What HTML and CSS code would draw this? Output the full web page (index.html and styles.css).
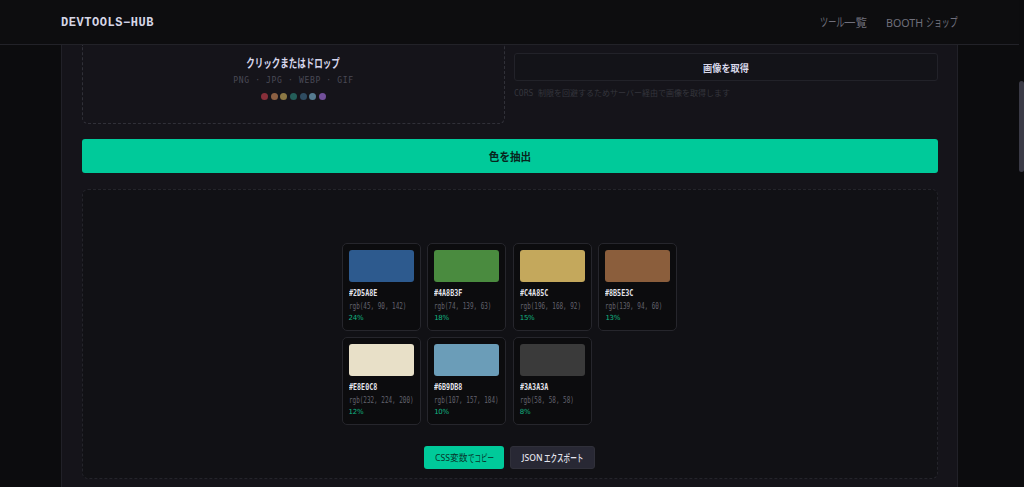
FILE: index.html
```html
<!DOCTYPE html>
<html lang="ja">
<head>
<meta charset="utf-8">
<title>DEVTOOLS-HUB</title>
<link rel="stylesheet" href="styles.css">
</head>
<body>
<header class="topbar">
  <div class="brand">DEVTOOLS−HUB</div>
  <nav class="nav"><a class="nav-tools"><span class="kana">ツール</span><span>一覧</span></a><a class="nav-shop"><span class="latin">BOOTH</span><span class="kana">ショップ</span></a></nav>
</header>
<main class="panel">
  <section class="inputs">
    <div class="drop">
      <div class="drop-title"><span>クリックまたはドロップ</span></div>
      <div class="formats">PNG · JPG · WEBP · GIF</div>
      <div class="dots"><i class="dot red"></i><i class="dot orange"></i><i class="dot yellow"></i><i class="dot teal"></i><i class="dot navy"></i><i class="dot sky"></i><i class="dot purple"></i></div>
    </div>
    <div class="fetch">
      <button class="fetch-btn"><span>画像を取得</span></button>
      <p class="hint">CORS 制限を回避するためサーバー経由で画像を取得します</p>
    </div>
  </section>
  <button class="extract"><span>色を抽出</span></button>
  <section class="result">
    <div class="grid">
      <article class="card"><div class="swatch c1"></div><div class="hex">#2D5A8E</div><div class="rgb">rgb(45, 90, 142)</div><div class="pct">24%</div></article>
      <article class="card"><div class="swatch c2"></div><div class="hex">#4A8B3F</div><div class="rgb">rgb(74, 139, 63)</div><div class="pct">18%</div></article>
      <article class="card"><div class="swatch c3"></div><div class="hex">#C4A85C</div><div class="rgb">rgb(196, 168, 92)</div><div class="pct">15%</div></article>
      <article class="card"><div class="swatch c4"></div><div class="hex">#8B5E3C</div><div class="rgb">rgb(139, 94, 60)</div><div class="pct">13%</div></article>
      <article class="card"><div class="swatch c5"></div><div class="hex">#E8E0C8</div><div class="rgb">rgb(232, 224, 200)</div><div class="pct">12%</div></article>
      <article class="card"><div class="swatch c6"></div><div class="hex">#6B9DB8</div><div class="rgb">rgb(107, 157, 184)</div><div class="pct">10%</div></article>
      <article class="card"><div class="swatch c7"></div><div class="hex">#3A3A3A</div><div class="rgb">rgb(58, 58, 58)</div><div class="pct">8%</div></article>
    </div>
    <div class="actions">
      <button class="copy"><span class="label">CSS変数</span><span class="kana">でコピー</span></button>
      <button class="export"><span class="label">JSON</span><span class="kana">エクスポート</span></button>
    </div>
  </section>
</main>
<div class="scroll-thumb"></div>
</body>
</html>
```
FILE: styles.css
```css
* { box-sizing: border-box; }
html, body { height: 100%; }
body {
  margin: 0;
  overflow: hidden;
  background: #0c0c0e;
  color: #e0e0f0;
  font-family: "Noto Sans", "Noto Sans CJK JP", sans-serif;
}
button { font-family: inherit; padding: 0; border: 0; display: flex; align-items: center; justify-content: center; }
span { display: inline-block; white-space: nowrap; transform-origin: left; }

.topbar {
  height: 45px;
  padding: 0 61px;
  margin-right: 5px;
  display: flex;
  align-items: center;
  justify-content: space-between;
  border-bottom: 1px solid #222228;
  background: #0d0d0f;
}
.brand { padding-top: 1px; font: bold 12px/16px "Liberation Mono", monospace; letter-spacing: .55px; color: #d6d6e6; }
.nav { display: flex; gap: 19px; padding-top: 2px; font-size: 11.5px; line-height: 16px; color: #70707c; }
.nav a { display: flex; }
.nav-tools { width: 47px; }
.nav-tools .kana { width: 24px; font-size: 12.5px; transform: scaleX(.65); }
.nav-shop { width: 72px; }
.nav-shop .latin { width: 40px; font-size: 11px; transform: scaleX(.97); }
.nav-shop .kana { width: 32px; font-size: 12px; transform: scaleX(.66); }

.panel {
  width: 897px;
  height: 442px;
  margin-left: 61px;
  padding: 0 20px;
  border: 1px solid #212128;
  border-width: 0 1px;
  background: #15141a;
}
.inputs { display: grid; grid-template-columns: 423px 424px; gap: 9px; height: 79px; }
.drop {
  display: flex;
  flex-direction: column;
  align-items: center;
  padding-top: 9px;
  border: 1px dashed #303038;
  border-top: 0;
  border-radius: 0 0 6px 6px;
}
.drop-title { font-size: 12px; font-weight: 700; line-height: 19px; height: 20px; }
.drop-title span { transform: scaleX(.71); transform-origin: center; color: #d8d8ee; }
.formats { padding-top: 1px; font: 8px/12px "DejaVu Sans Mono", monospace; letter-spacing: .66px; color: #4a4a56; }
.dots { display: flex; gap: 2.6px; margin-top: 6px; }
.dot { width: 7px; height: 7px; border-radius: 50%; }
.red { background: #872f3a; }
.orange { background: #8c6043; }
.yellow { background: #8c7844; }
.teal { background: #245e59; }
.navy { background: #2f4c61; }
.sky { background: #557b90; }
.purple { background: #72509a; }
.fetch { padding-top: 8px; }
.fetch-btn { width: 424px; height: 28px; border: 1px solid #222229; border-radius: 3px; background: #131318; color: #d8d8ea; font-size: 10px; font-weight: 700; }
.fetch-btn span { transform: scaleX(.92); transform-origin: center; }
.hint { margin: 6px 0 0; font: 8px/13px "DejaVu Sans Mono", "Noto Sans CJK JP", monospace; color: #34343c; white-space: nowrap; }

.extract { width: 856px; height: 34px; margin: 15px 0 16px; border-radius: 3px; background: #00ca9a; color: #08251d; font-size: 11.5px; font-weight: 700; }
.extract span { transform: scaleX(.92); transform-origin: center; }

.result {
  width: 856px;
  height: 290px;
  padding-top: 52.5px;
  padding-right: .8px;
  border: 1px dashed #24242b;
  border-radius: 6px;
  background: #111115;
  display: flex;
  flex-direction: column;
  align-items: center;
}
.grid { display: grid; grid-template-columns: repeat(4, 79px); gap: 6px 6.6px; width: 336px; }
.card { height: 88px; padding: 6.5px 6px; border: 1px solid #26262c; border-radius: 5px; background: #0c0c0e; white-space: nowrap; }
.swatch { width: 65px; height: 32px; border-radius: 3px; margin-bottom: 5px; }
.c1 { background: #2d5a8e; }
.c2 { background: #4a8b3f; }
.c3 { background: #c4a85c; }
.c4 { background: #8b5e3c; }
.c5 { background: #e8e0c8; }
.c6 { background: #6b9db8; }
.c7 { background: #3a3a3a; }
.hex, .rgb { font-family: "DejaVu Sans Mono", monospace; transform-origin: left; }
.hex { font-size: 9px; line-height: 13px; font-weight: 700; transform: scaleX(.745); color: #e4e4ec; }
.rgb { padding-top: 1px; font-size: 8px; line-height: 12px; transform: scaleX(.745); color: #62626d; }
.pct { font: 7px/11px "DejaVu Sans", sans-serif; letter-spacing: -.3px; color: #12b482; }
.actions { display: flex; gap: 6.5px; margin-top: 21px; }
.copy, .export { height: 23px; border-radius: 3px; font-size: 9.5px; }
.copy { width: 80px; background: #00ca9a; color: #07352a; }
.copy .label { width: 33px; transform: scaleX(.92); }
.copy .kana { width: 25px; font-size: 10px; transform: scaleX(.65); }
.export { width: 85px; border: 1px solid #30303a; background: #282834; color: #e4e4ee; font-weight: 500; }
.export .label { width: 22px; transform: scaleX(.9); }
.export .kana { width: 39px; font-size: 10px; transform: scaleX(.66); }

.scroll-thumb { position: absolute; right: 0; top: 81px; width: 5px; height: 91px; border-radius: 3px; background: #3a3a46; }
```
